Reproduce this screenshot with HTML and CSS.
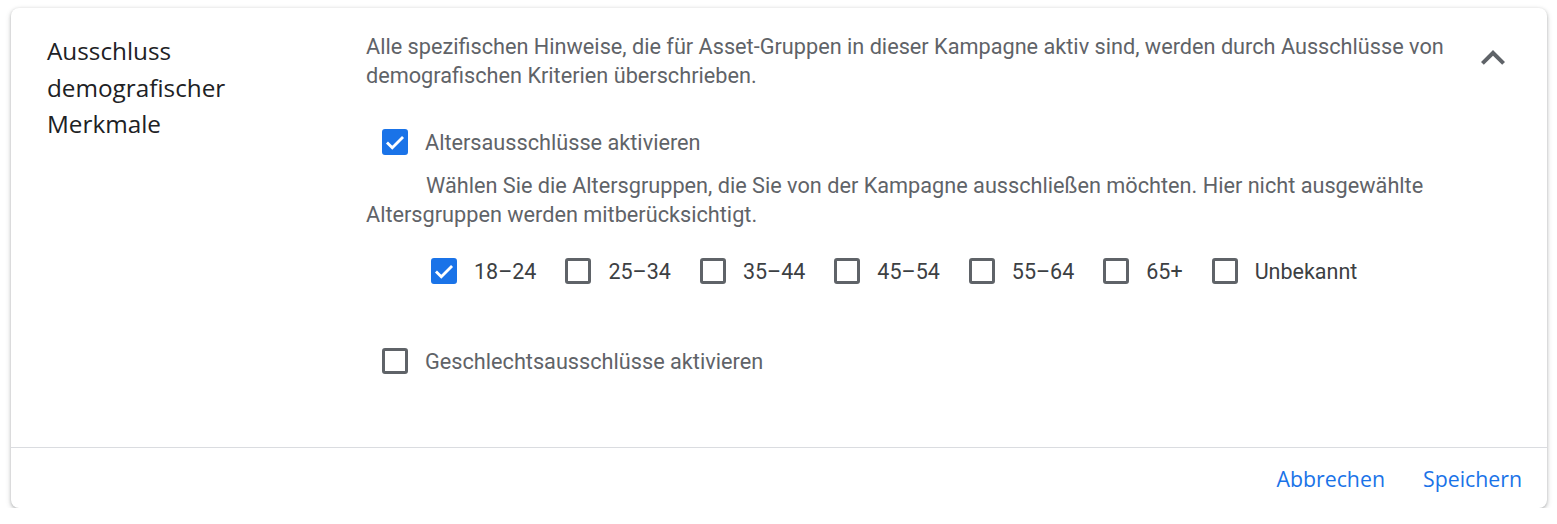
FILE: index.html
```html
<!DOCTYPE html>
<html lang="de">
<head>
<meta charset="utf-8">
<title>Ausschluss demografischer Merkmale</title>
<link rel="stylesheet" href="styles.css">
</head>
<body>
<div class="card">
  <div class="card-main">
    <div class="title">Ausschluss demografischer Merkmale</div>
    <div class="content">
      <p class="desc">Alle spezifischen Hinweise, die für Asset-Gruppen in dieser Kampagne aktiv sind, werden durch Ausschlüsse von demografischen Kriterien überschrieben.</p>
      <label class="option opt-age">
        <span class="cb checked"><svg viewBox="0 0 24 24"><path d="M4.6 12.4l4.9 4.9L19.4 7.4" fill="none" stroke="#fff" stroke-width="2.6"/></svg></span>
        <span class="opt-label">Altersausschlüsse aktivieren</span>
      </label>
      <p class="helper">Wählen Sie die Altersgruppen, die Sie von der Kampagne ausschließen möchten. Hier nicht ausgewählte Altersgruppen werden mitberücksichtigt.</p>
      <div class="ages">
        <label class="age"><span class="cb checked"><svg viewBox="0 0 24 24"><path d="M4.6 12.4l4.9 4.9L19.4 7.4" fill="none" stroke="#fff" stroke-width="2.6"/></svg></span><span class="age-label">18–24</span></label>
        <label class="age"><span class="cb"></span><span class="age-label">25–34</span></label>
        <label class="age"><span class="cb"></span><span class="age-label">35–44</span></label>
        <label class="age"><span class="cb"></span><span class="age-label">45–54</span></label>
        <label class="age"><span class="cb"></span><span class="age-label">55–64</span></label>
        <label class="age"><span class="cb"></span><span class="age-label">65+</span></label>
        <label class="age"><span class="cb"></span><span class="age-label">Unbekannt</span></label>
      </div>
      <label class="option opt-gender">
        <span class="cb"></span>
        <span class="opt-label">Geschlechtsausschlüsse aktivieren</span>
      </label>
    </div>
    <div class="toggle">
      <svg viewBox="0 0 24 24"><path d="M12 8l-6 6 1.41 1.41L12 10.83l4.59 4.58L18 14z" fill="#5f6368"/></svg>
    </div>
  </div>
  <div class="card-footer">
    <button class="btn">Abbrechen</button>
    <button class="btn">Speichern</button>
  </div>
</div>
</body>
</html>
```

FILE: styles.css
```css
html, body {
  margin: 0;
  padding: 0;
  background: #fff;
}

body {
  font-family: Roboto, "Liberation Sans", sans-serif;
  padding: 8px 10px 0 11px;
}

.card {
  width: 1536px;
  height: 500px;
  background: #fff;
  border-radius: 8px;
  box-shadow: 0 1px 3px rgba(60, 64, 67, 0.3), 0 2px 5px 1px rgba(60, 64, 67, 0.15);
  display: flex;
  flex-direction: column;
}

.card-main {
  flex: 1;
  display: flex;
  padding: 24px 30px 0 36px;
  border-bottom: 1px solid #dadce0;
}

.title {
  width: 240px;
  margin-right: 79px;
  flex: none;
  font-family: "Open Sans", sans-serif;
  font-size: 24.3px;
  line-height: 36.5px;
  color: #202124;
  padding-top: 1px;
}

.content {
  flex: 1;
}

.desc {
  margin: 0;
  font-size: 21.7px;
  line-height: 29px;
  color: #5f6368;
  max-width: 1090px;
}

.option {
  display: flex;
  align-items: center;
  height: 40px;
  padding-left: 16px;
}

.opt-age {
  margin-top: 32px;
}

.opt-gender {
  margin-top: 50px;
}

.opt-label {
  margin-left: 17px;
  font-size: 21.7px;
  color: #5f6368;
}

.helper {
  margin: 9px 0 0;
  text-indent: 60px;
  font-size: 21.7px;
  line-height: 29px;
  color: #5f6368;
}

.ages {
  display: flex;
  gap: 29px;
  height: 40px;
  align-items: center;
  margin-top: 22px;
  padding-left: 65px;
}

.age {
  display: flex;
  align-items: center;
}

.age-label {
  margin-left: 17px;
  font-size: 21.5px;
  color: #3c4043;
}

.cb {
  box-sizing: border-box;
  width: 26px;
  height: 26px;
  border: 3px solid #5f6368;
  border-radius: 3px;
  flex: none;
  display: flex;
  align-items: center;
  justify-content: center;
}

.cb.checked {
  background: #1a73e8;
  border-color: #1a73e8;
}

.cb svg {
  width: 26px;
  height: 26px;
  flex: none;
}

.toggle {
  width: 48px;
  height: 48px;
  margin-left: 24px;
  margin-top: 2px;
  flex: none;
}

.toggle svg {
  width: 48px;
  height: 48px;
  display: block;
}

.card-footer {
  height: 60px;
  display: flex;
  align-items: center;
  justify-content: flex-end;
  gap: 38px;
  padding-right: 25px;
}

.btn {
  background: none;
  border: none;
  padding: 0;
  font-family: "Open Sans", sans-serif;
  font-weight: 500;
  font-size: 21.3px;
  color: #1a73e8;
  cursor: pointer;
}
```
